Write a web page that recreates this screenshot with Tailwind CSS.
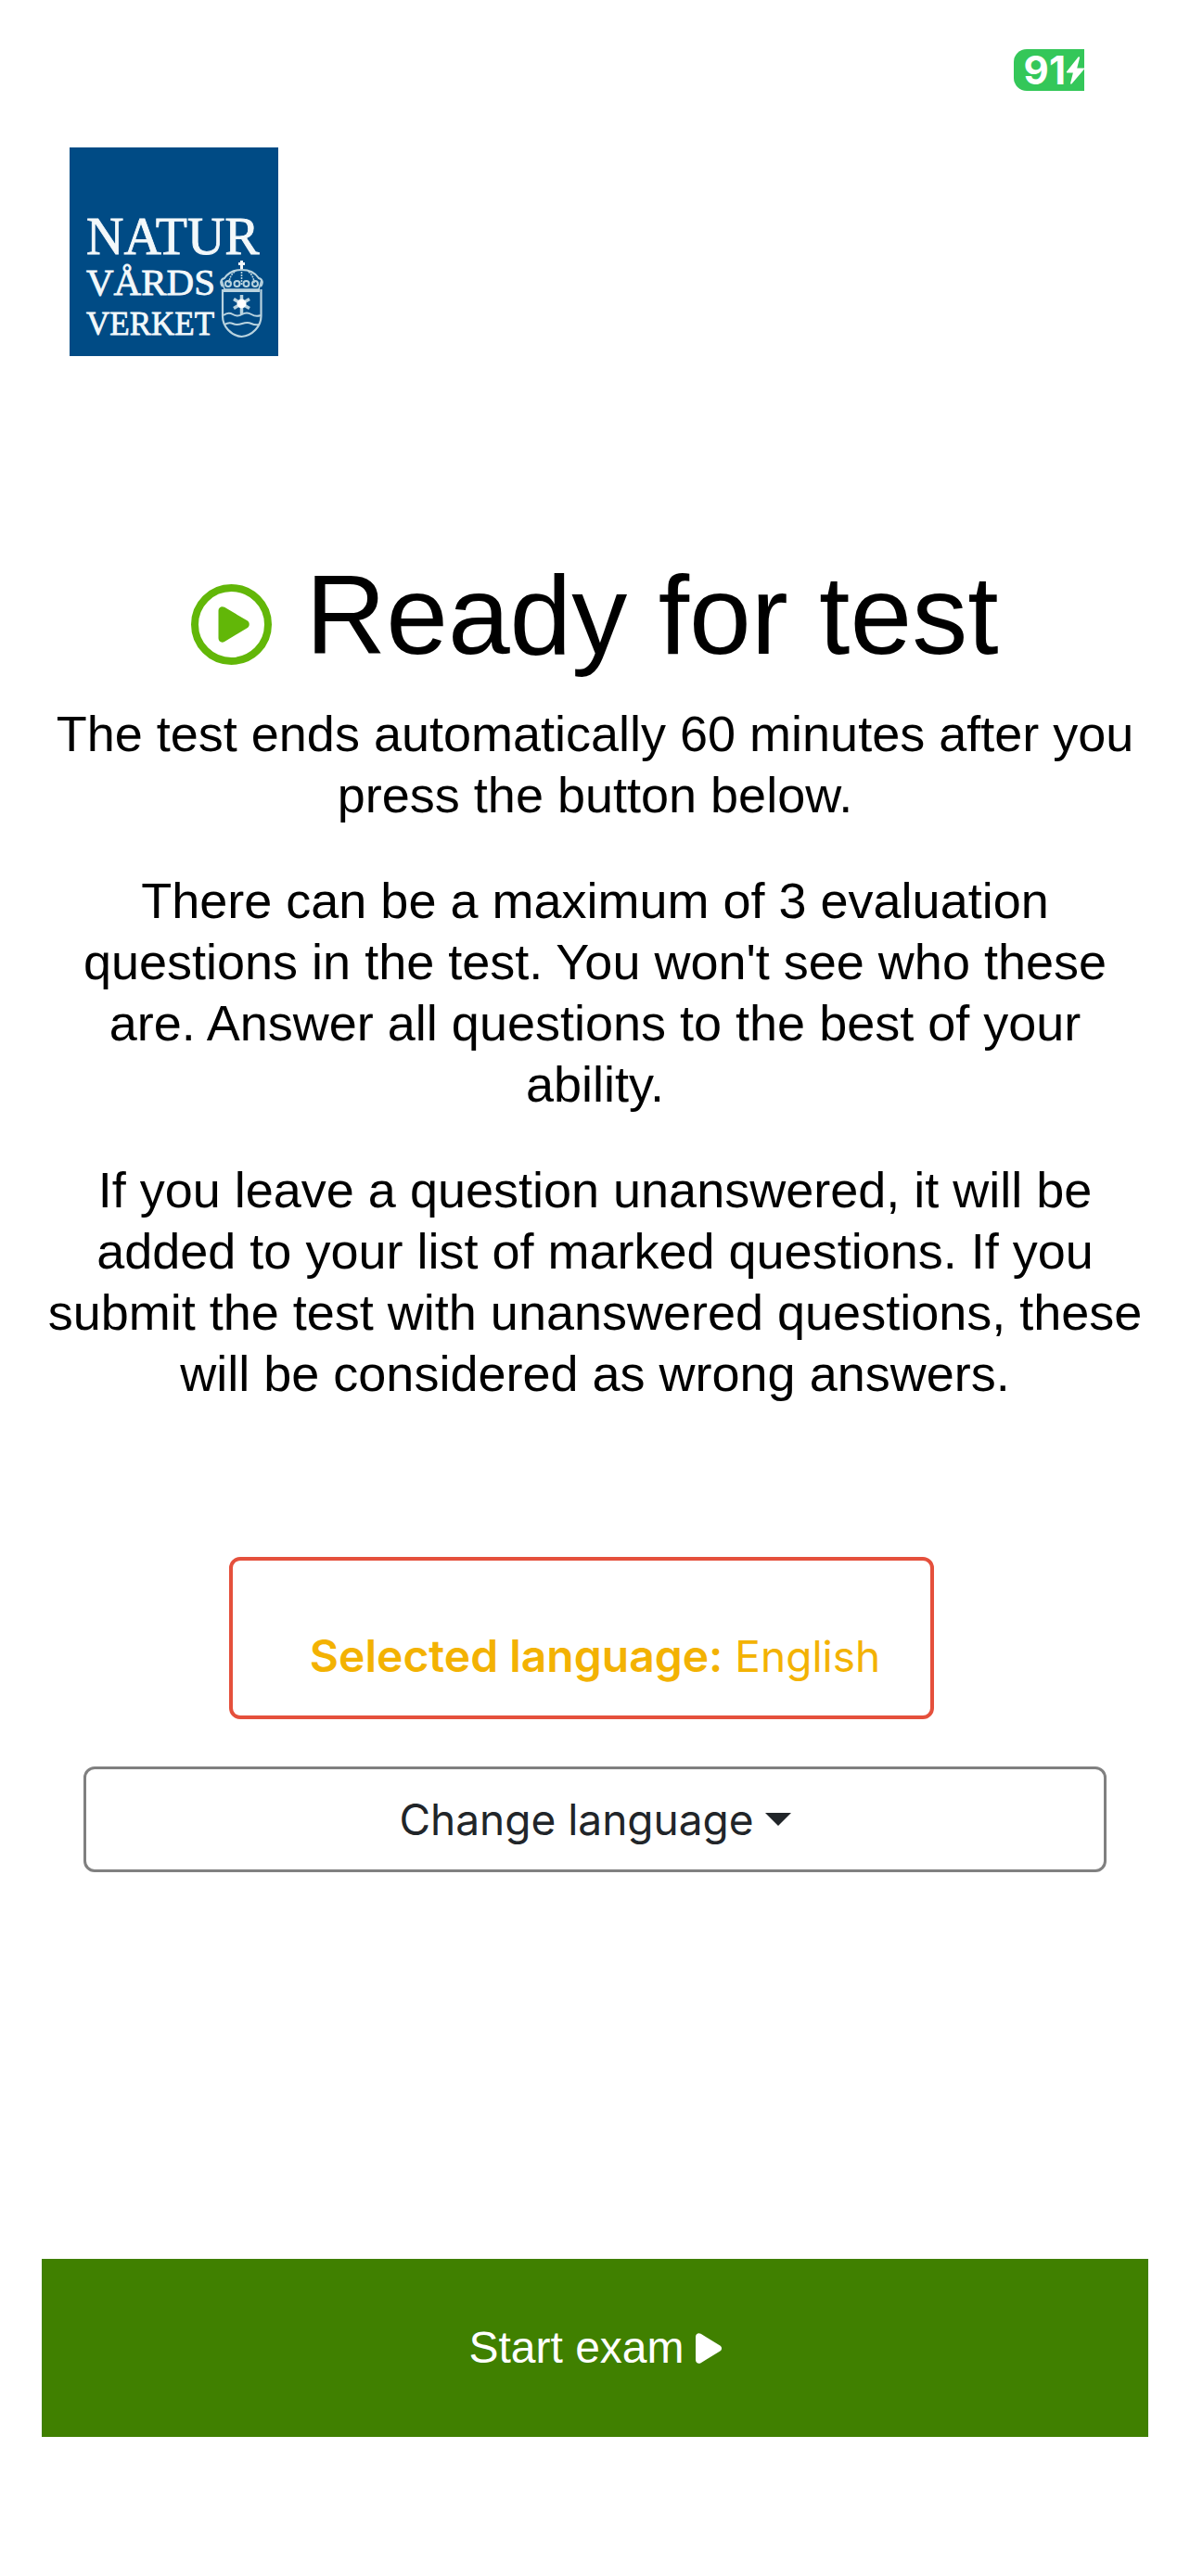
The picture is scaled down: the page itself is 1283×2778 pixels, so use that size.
<!DOCTYPE html>
<html lang="en">
  <head>
    <meta charset="UTF-8" />
    <meta name="viewport" content="width=device-width, initial-scale=1.0" />
    <title>Ready for test</title>
    <script src="https://cdn.jsdelivr.net/npm/@tailwindcss/browser@4"></script>
  </head>
  <body class="bg-white text-black font-['Liberation_Sans',Arial,sans-serif]">
    <!-- Status bar -->
    <div class="flex justify-end pt-[53px] pr-[114px]">
      <div class="flex h-[45px] items-center rounded-l-[14px] bg-[#34c759] pl-[11px] text-white">
        <span class="font-['Inter',sans-serif] text-[42px] leading-[45px] font-bold">91</span>
        <svg class="h-[30px] w-5" viewBox="0 0 20 30" fill="currentColor" aria-hidden="true">
          <path d="M13.5.6 1 16.2c-.5.7-.2 1.3.6 1.3h6.3L5.2 28.2c-.4 1.5.7 2 1.6.9L20 13.4v-.9h-7.8L15 1.4C15.3.2 14.3-.3 13.5.6Z" />
        </svg>
      </div>
    </div>

    <!-- Logo -->
    <header class="mt-[61px] px-[75px]">
      <svg class="size-[225px]" viewBox="0 0 225 225" role="img" aria-label="Naturvårdsverket">
        <rect width="225" height="225" fill="#004b85" />
        <g class="font-['Liberation_Serif',serif]" fill="#f3f8fa" stroke="#f3f8fa" stroke-width="0.8">
          <text x="18" y="115" font-size="56">NATUR</text>
          <text x="18" y="159" font-size="41">VÅRDS</text>
          <text x="18" y="202" font-size="35">VERKET</text>
        </g>
        <!-- Crown and shield -->
        <g fill="none" stroke="#b9d3df" stroke-width="1.6">
          <path d="M185.5 122v9M182 125.500h7" stroke="#f3f8fa" stroke-width="3" />
          <path d="M165 150c-3-4-2-8 2-9 4-6 11-9 18.500-9s14.500 3 18.500 9c4 1 5 5 2 9" stroke-width="2.200" />
          <path d="M164 143l3 10h37l3-10" />
          <path d="M185.500 131v17M178 134c-4 3-6 8-6 13M193 134c4 3 6 8 6 13" stroke-dasharray="2 1" />
          <g stroke-width="2">
            <circle cx="171" cy="147" r="3" />
            <circle cx="180.500" cy="147" r="3" />
            <circle cx="190.500" cy="147" r="3" />
            <circle cx="200" cy="147" r="3" />
          </g>
          <path d="M166 154.500h39" stroke-width="3" />
          <path d="M165 153v29c0 11 9 21 20.500 22 11.500-1 21-11 21-22v-29" stroke-width="2.200" />
          <path d="M166 181q5-4 10-1t10 0 10 0 10 1M167 191q5-3 9-1t10 0 10 0 9 1" stroke-width="2" />
          <path d="M185.500 159v21M177 163.500l17 10M177 173.500l17-10" stroke-width="3.500" />
        </g>
        <circle cx="185.500" cy="168.500" r="5" fill="#fff" />
      </svg>
    </header>

    <main class="px-[45px] text-center">
      <h1 class="mt-[207px] flex items-center justify-center gap-9 text-[120px] leading-[144px]">
        <svg class="mt-5 size-[87px] text-[#62b708]" viewBox="0 0 87 87" fill="currentColor" aria-hidden="true">
          <circle cx="43.500" cy="43.500" r="39.500" fill="none" stroke="currentColor" stroke-width="8" />
          <path d="M29.500 28.500c0-3.500 3.500-5.500 6.500-3.700l24.500 14.500c3 1.900 3 6.100 0 8L36 62c-3 1.800-6.500-.2-6.500-3.700Z" />
        </svg>
        Ready for test
      </h1>

      <div class="mt-[23px] space-y-12 text-[54px] leading-[66px]">
        <p>The test ends automatically 60 minutes after you press the button below.</p>
        <p>There can be a maximum of 3 evaluation questions in the test. You won't see who these are. Answer all questions to the best of your ability.</p>
        <p>If you leave a question unanswered, it will be added to your list of marked questions. If you submit the test with unanswered questions, these will be considered as wrong answers.</p>
      </div>

      <!-- Language -->
      <div class="mt-[165px] px-[45px] font-['Inter',sans-serif] text-[46px] leading-[72px]">
        <div class="mr-[29px]">
          <p class="inline-block rounded-xl border-4 border-[#e5503c] pt-[67px] pr-[54px] pb-7 pl-[83px] align-top text-[#f3b202]">
            <b class="text-[48px] font-semibold">Selected language:</b> English
          </p>
        </div>
        <button type="button" class="mt-[51px] flex w-full items-center justify-center gap-3 rounded-xl border-3 border-[#808080] py-[18px] text-[#212529]">
          Change language
          <svg class="h-[14px] w-7" viewBox="0 0 28 14" fill="currentColor" aria-hidden="true">
            <path d="M0 0h28L14 14Z" />
          </svg>
        </button>
      </div>

      <button type="button" class="mt-[417px] mb-[150px] flex w-full items-center justify-center gap-3 bg-[#408000] py-[60px] text-[48px] leading-[72px] text-white">
        Start exam
        <svg class="h-[33px] w-7" viewBox="0 0 28 33" fill="currentColor" aria-hidden="true">
          <path d="M0 4C0 .9 3 -.8 5.600.8L26.300 13.500c2.300 1.500 2.300 4.500 0 6L5.600 32.200C3 33.800 0 32.100 0 29Z" />
        </svg>
      </button>
    </main>
  </body>
</html>
